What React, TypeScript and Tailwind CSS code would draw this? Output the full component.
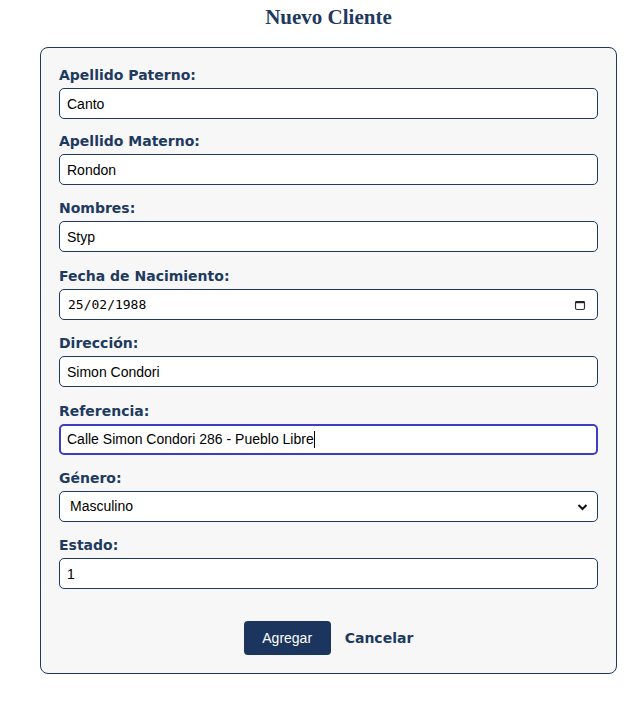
import React from 'react';

const labelCls =
  "block text-[14px] leading-[17px] font-bold text-[#1e3a5f] mb-[4px] font-['DejaVu_Sans',sans-serif]";
const boxCls =
  "w-full h-[31px] rounded-[5px] border border-[#1e3a5f] bg-white px-[7px] text-[14px] text-black font-['Liberation_Sans',Arial,sans-serif] outline-none";

function Field({ label, value, gap = 'mb-[15px]' }: { label: string; value: string; gap?: string }) {
  return (
    <div className={gap}>
      <label className={labelCls}>{label}</label>
      <input className={boxCls} defaultValue={value} readOnly />
    </div>
  );
}

export default function App() {
  return (
    <div className="min-h-screen bg-white">
      <div className="ml-[40px] w-[577px]">
        <h2 className="pt-[5px] text-center text-[21px] leading-[24px] font-bold text-[#1e3a5f] font-['Liberation_Serif','Times_New_Roman',serif]">
          Nuevo Cliente
        </h2>
        <form className="mt-[18px] rounded-[8px] border border-[#1e3a5f] bg-[#f7f7f7] px-[18px] pt-[19px] pb-[18px]">
          <Field label="Apellido Paterno:" value="Canto" gap="mb-[14px]" />
          <Field label="Apellido Materno:" value="Rondon" />
          <Field label="Nombres:" value="Styp" gap="mb-[16px]" />

          <div className="mb-[15px]">
            <label className={labelCls}>Fecha de Nacimiento:</label>
            <div className={boxCls + ' flex items-center justify-between'}>
              <span className="text-[13px] text-black font-['DejaVu_Sans_Mono',monospace] pl-[1px]">
                25/02/1988
              </span>
              <svg width="12" height="12" viewBox="0 0 12 12" className="mr-[4px]">
                <rect x="1.5" y="2.5" width="9" height="8" rx="1.5" fill="none" stroke="#333" strokeWidth="1.2" />
                <rect x="1.5" y="2" width="9" height="2.2" fill="#222" />
              </svg>
            </div>
          </div>

          <Field label="Dirección:" value="Simon Condori" gap="mb-[16px]" />

          <div className="mb-[15px]">
            <label className={labelCls}>Referencia:</label>
            <div className="flex h-[31px] w-full items-center rounded-[5px] border-2 border-[#3d3dc4] bg-white px-[6px] text-[14px] text-black font-['Liberation_Sans',Arial,sans-serif]">
              <span>Calle Simon Condori 286 - Pueblo Libre</span>
              <span className="inline-block h-[17px] w-px bg-black" />
            </div>
          </div>

          <div className="mb-[15px]">
            <label className={labelCls}>Género:</label>
            <div className={boxCls + ' flex items-center justify-between pl-[10px]'}>
              <span>Masculino</span>
              <svg width="11" height="8" viewBox="0 0 11 8" className="mr-[2px]">
                <path d="M1.5 2 L5.5 6 L9.5 2" fill="none" stroke="#111" strokeWidth="2" />
              </svg>
            </div>
          </div>

          <Field label="Estado:" value="1" />

          <div className="mt-[32px] flex items-center justify-center gap-[14px]">
            <button
              type="button"
              className="h-[34px] w-[87px] rounded-[4px] bg-[#1c355e] text-[14px] text-white font-['Liberation_Sans',Arial,sans-serif]"
            >
              Agregar
            </button>
            <button
              type="button"
              className="text-[14px] font-bold text-[#1e3a5f] font-['DejaVu_Sans',sans-serif]"
            >
              Cancelar
            </button>
          </div>
        </form>
      </div>
    </div>
  );
}
